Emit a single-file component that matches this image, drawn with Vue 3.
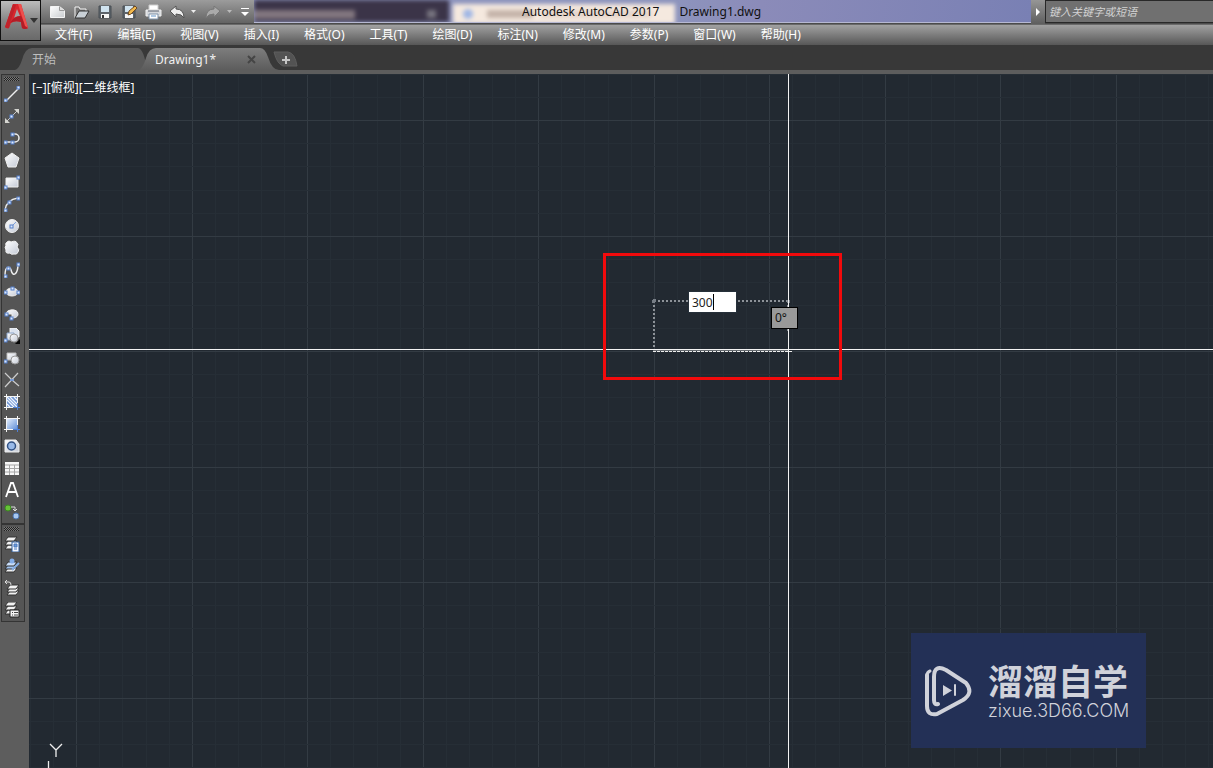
<script setup>
import { ref } from 'vue'

const menus = ['文件(F)', '编辑(E)', '视图(V)', '插入(I)', '格式(O)', '工具(T)', '绘图(D)', '标注(N)', '修改(M)', '参数(P)', '窗口(W)', '帮助(H)']
const length = ref('300')
const query = ref('')

const node = (x, y) => `<rect x="${x - 1}" y="${y - 1}" width="3" height="3" fill="#dce8fb" stroke="#547fc9"/>`
const sheet = (y, fill = '#f2f2f2') => `<path d="M4 ${y}h9l-3 4H1z" fill="${fill}" stroke="#333"/>`

const drawTools = [
  { label: '直线', art: `<path d="M2 15L15 2" stroke="#eee" stroke-width="1.5"/>${node(1, 14)}${node(14, 1)}` },
  { label: '构造线', art: `<path d="M2 14L14 2" stroke="#ccc"/><path d="M1 10v5h5zM10 1h5v5z" fill="#d5d5d0"/>${node(7, 8)}` },
  { label: '多段线', art: `<path d="M1 12H9M8 4h3a4 4 0 0 1 0 8H8" fill="none" stroke="#eee" stroke-width="1.5"/>${node(1, 12)}${node(8, 12)}${node(8, 4)}` },
  { label: '多边形', art: '<path d="M8 1l7 5-3 9H4L1 6z" fill="url(#face)" stroke="#eee"/>' },
  { label: '矩形', art: `<path d="M2 4h12v9H2z" fill="url(#face)" stroke="#eee"/>${node(1, 13)}${node(14, 3)}` },
  { label: '圆弧', art: `<path d="M1 14C2 7 7 3 14 2" fill="none" stroke="#eee" stroke-width="1.5"/>${node(1, 14)}${node(5, 6)}${node(14, 2)}` },
  { label: '圆', art: `<circle cx="8" cy="8" r="6.5" fill="url(#face)" stroke="#eee"/><path d="M8 8l4-4" stroke="#7da0dc"/>${node(7, 8)}` },
  { label: '修订云线', art: '<path d="M3 2q2-2 4 0q5-2 6 1q2 1 0 4q3 3 1 5q-1 3-4 2q-3 1-4-1q-5 1-4-3q-2-4 0-4q-1-3 1-4z" fill="url(#face)" stroke="#eee"/>' },
  { label: '样条曲线', art: `<path d="M1 14C1 2 6 5 7 8c2 8 7 4 7-6" fill="none" stroke="#eee" stroke-width="1.5"/>${node(1, 14)}${node(4, 6)}${node(14, 2)}` },
  { label: '椭圆', art: `<ellipse cx="8" cy="8" rx="6" ry="4" fill="url(#face)" stroke="#eee"/>${node(1, 8)}${node(14, 8)}${node(8, 4)}` },
  { label: '椭圆弧', art: `<path d="M2 8C2 3 14 2 14 8c0 3-3 4-6 4V8z" fill="url(#face)" stroke="#eee"/>${node(2, 8)}${node(7, 12)}` },
  { label: '插入块', art: `<path d="M6 0h6l3 3v6H6z" fill="#dbe3ef" stroke="#f4f4f4"/><path d="M3 5h7v7H3z" fill="url(#face)" stroke="#8ea7cc"/><circle cx="10" cy="10" r="4" fill="url(#face)" stroke="#999"/>${node(1, 12)}<path d="M16 11v5h-5z" fill="#050505"/>` },
  { label: '创建块', art: `<path d="M3 3h9v7H3z" fill="url(#face)" stroke="#bbb"/><circle cx="11" cy="10" r="4" fill="url(#face)" stroke="#999"/>${node(1, 11)}` },
  { label: '点', art: '<path d="M1 1l7 7M1 15L14 1M8 8l7 6" stroke="#ccc" stroke-width="1.2"/><path d="M6 7h4v2H6z" fill="#799bd5"/>' },
  { label: '图案填充', art: '<path d="M3 3h10v10H3z" fill="#6e94d2"/><path d="M3 6l7 7M3 3l10 10M6 3l7 7M10 3l3 3M3 10l3 3" stroke="#edf4ff" stroke-width="1.3"/><path d="M0 2.500h16M2.500 0v16M13.500 0v10M0 13.500h10" stroke="#f5f5f5"/><path d="M9 13.500h7M13.500 9v7" stroke="#4f80d4"/>' },
  { label: '渐变色', art: '<path d="M3 3h10v10H3z" fill="url(#blue)"/><path d="M0 2.500h16M2.500 0v16M13.500 0v10M0 13.500h10" stroke="#f5f5f5"/><path d="M9 13.500h7M13.500 9v7" stroke="#4f80d4"/>' },
  { label: '面域', art: '<path d="M1 2h11l3 4v8H1z" fill="url(#face)" stroke="#eee"/><circle cx="7.500" cy="8" r="4" fill="#99bae9" stroke="#315183" stroke-width="1.5"/>' },
  { label: '表格', art: '<path d="M1 2h14v13H1z" fill="#f7f7f7"/><path d="M1 5h14M1 8.500h14M1 12h14M5.500 5v10M10.500 5v10" stroke="#a5a5a5"/>' },
  { label: '多行文字', art: '<path d="M2 15L7 1h2l5 14M4.500 10h7" fill="none" stroke="#fff" stroke-width="1.8"/>' },
  { label: '添加选定对象', art: '<circle cx="4" cy="4" r="3" fill="#66c338" stroke="#3b8920"/><circle cx="12" cy="12" r="3" fill="#a8c7f1" stroke="#4b75b5"/><path d="M7 3h4v4M9 5l2 2 2-2" fill="none" stroke="#ddd"/>' }
]
const layerTools = [
  { label: '图层特性', art: `${sheet(9)}${sheet(5)}${sheet(1)}<path d="M8 6h7v10H8z" fill="#f5f8ff" stroke="#315e9d"/><path d="M10 8h3v3h-3zM10 13h3" fill="#6c99d8" stroke="#4879bd"/>` },
  { label: '置为当前', art: `${sheet(10)}${sheet(7, '#9fc2f0')}${sheet(4, '#c9ddf8')}<circle cx="8" cy="3" r="2.500" fill="#84aee9"/><path d="M8 12l7-7" stroke="#86ade2" stroke-width="2"/>` },
  { label: '上一个图层', art: `<g transform="translate(2 1)">${sheet(10)}${sheet(7)}${sheet(4)}</g><path d="M3 0L1 2l2 2M1 2h4q2 0 2 3" fill="none" stroke="#ddd"/>` },
  { label: '图层状态', art: `${sheet(8)}${sheet(4)}${sheet(0)}<path d="M6 8h9v7H6z" fill="#f5f5f5" stroke="#222"/><path d="M8 10.500h1M10 10.500h4M8 13h1M10 13h4" stroke="#444"/>` }
]
const quickTools = [
  { label: '新建', art: '<path d="M1.500 2.500h9l5 4v7h-14z" fill="url(#paper)" stroke="#f4f4f4"/><path d="M10.500 2.500v4h5" fill="#ddd" stroke="#999"/>' },
  { label: '打开', art: '<path d="M2 14V3h4l1 2h6v2" fill="#777" stroke="#f4f4f4"/><path d="M2 14L6 7h10l-4 7z" fill="#c9d0d6" stroke="#333"/>' },
  { label: '保存', art: '<path d="M2 2h12v12H2z" fill="#5d646b" stroke="#484e54"/><path d="M4 2h8v6H4z" fill="#d0e3ef"/><path d="M4 10h8v4H4z" fill="#f5f5f5"/><path d="M6 11v3" stroke="#333" stroke-width="2"/>' },
  { label: '另存为', art: '<path d="M2 2h12v12H2z" fill="#5d646b" stroke="#484e54"/><path d="M4 2h8v6H4z" fill="#d0e3ef"/><path d="M4 10h8v4H4z" fill="#f5f5f5"/><path d="M7 11l1-4 6-5 2 2-6 6z" fill="#f2b94d" stroke="#704a22"/>' },
  { label: '打印', art: '<path d="M4 1h9v5H4z" fill="#fff" stroke="#ccc"/><path d="M1 6h15v6H1z" fill="#d4d7dc" stroke="#f1f1f1"/><path d="M3 7h11" stroke="#5c6570"/><path d="M4 10h9v5H4z" fill="#fff" stroke="#7e91a8"/><path d="M6 12h5" stroke="#5f91c8"/>' }
]

const span = (start, count) => Array.from({ length: count }, (_, i) => ({
  at: Math.round(start + i * 23.1),
  major: (i + 3) % 5 === 0
}))
const columns = span(1, 110)
const rows = span(0, 70)
</script>

<template>
  <div class="cad">
    <svg class="defs" aria-hidden="true">
      <defs>
        <linearGradient id="face" x1="0" y1="0" x2="1" y2="1"><stop stop-color="#fff" /><stop offset="1" stop-color="#c3c9d5" /></linearGradient>
        <linearGradient id="paper" x1="0" y1="0" x2="1" y2="1"><stop stop-color="#fff" /><stop offset="1" stop-color="#c9cccf" /></linearGradient>
        <linearGradient id="blue" x1="0" y1="0" x2="1" y2="1"><stop stop-color="#e2edfc" /><stop offset="1" stop-color="#6693d9" /></linearGradient>
      </defs>
    </svg>

    <header class="top">
      <button class="app-button" aria-label="应用程序菜单">
        <svg width="39" height="36" viewBox="0 0 39 36">
          <path d="M13 16l3-9 4 8z" fill="#a5a3a3" />
          <path d="M4 26L12 3h8l7 24q-3 2-6 0l-1-6q-6-2-10 1l-2 5q-2 1-4-1zM16 8l-3 9q3-2 6-2z" fill="#d8272e" fill-rule="evenodd" />
          <path d="M4 26L12 3l3 1-6 18-1 5q-2 1-4-1z" fill="#c0222a" />
          <path d="M9 22q4-7 11-7l7 12q-3 2-6 0l-1-6q-6-2-11 1z" fill="#b31c26" />
          <path d="M17 3h3l7 24-3-2z" fill="#ee4f4d" />
          <path d="M29 17h8l-4 5z" fill="#333" />
        </svg>
      </button>
      <div class="bars">
        <div class="title-bar">
          <div class="quick">
            <button v-for="t in quickTools" :key="t.label" :aria-label="t.label"><svg width="17" height="17" viewBox="0 0 17 17" fill="none" v-html="t.art" /></button>
            <button aria-label="放弃"><svg width="29" height="16" viewBox="0 0 29 16"><path d="M1 7l6-5v3q8 0 8 9q-2-4-8-4v3z" fill="#eee" stroke="#555" /><path d="M22 6h5l-2.500 3z" fill="#eee" /></svg></button>
            <button aria-label="重做"><svg width="29" height="16" viewBox="0 0 29 16"><path d="M15 7L9 2v3q-8 0-8 9q2-4 8-4v3z" fill="#aaa" stroke="#777" /><path d="M22 6h5l-2.500 3z" fill="#bbb" /></svg></button>
            <button class="more" aria-label="自定义快速访问工具栏"><svg width="10" height="12" viewBox="0 0 10 12"><path d="M1 2.500h8" stroke="#fff" /><path d="M1 6h8l-4 4z" fill="#fff" /></svg></button>
          </div>
          <div class="glass">
            <div class="behind" aria-hidden="true"><div class="dark"><i></i><b></b></div><div class="cream"><em></em><i></i><b></b></div></div>
            <h1 class="title"><span>Autodesk AutoCAD 2017</span><span>Drawing1.dwg</span></h1>
          </div>
          <button class="expand" aria-label="展开搜索"><svg width="12" height="12" viewBox="0 0 12 12"><path d="M4 2l4 4-4 4z" fill="#fff" /></svg></button>
          <input v-model="query" class="search" type="text" placeholder="键入关键字或短语" aria-label="搜索">
        </div>
        <nav class="menu"><button v-for="m in menus" :key="m">{{ m }}</button></nav>
      </div>
    </header>

    <div class="tabs">
      <svg class="tab-art" width="310" height="25" viewBox="0 0 310 25" aria-hidden="true">
        <defs><linearGradient id="tab" x2="0" y2="1"><stop stop-color="#7d7d7d" /><stop offset="1" stop-color="#5c5c5c" /></linearGradient></defs>
        <path d="M15 25Q19 24 22 15Q25 3 32 3H138Q144 4 147 25z" fill="#595959" />
        <path d="M139 25Q143 23 146 13Q149 3 156 3H260Q265 3 268 12Q272 25 279 25z" fill="url(#tab)" />
        <path d="M274 7H288Q295 8 297 21H283Q277 19 274 7z" fill="#535353" stroke="#5e5e5e" />
      </svg>
      <button class="start">开始</button>
      <button class="drawing">Drawing1*</button>
      <button class="close" aria-label="关闭图形"><svg width="9" height="9" viewBox="0 0 9 9"><path d="M1 1l7 7M8 1L1 8" stroke="#454545" stroke-width="2" /></svg></button>
      <button class="plus" aria-label="新图形"><svg width="10" height="10" viewBox="0 0 10 10"><path d="M5 1v8M1 5h8" stroke="#c6c6c6" stroke-width="2" /></svg></button>
    </div>

    <div class="work">
      <aside class="side">
        <div class="toolbar" role="toolbar" aria-label="绘图">
          <span class="grip"></span>
          <button v-for="t in drawTools" :key="t.label" :aria-label="t.label"><svg width="16" height="16" viewBox="0 0 16 16" fill="none" v-html="t.art" /></button>
        </div>
        <div class="toolbar" role="toolbar" aria-label="图层">
          <span class="grip"></span>
          <button v-for="t in layerTools" :key="t.label" :aria-label="t.label"><svg width="16" height="16" viewBox="0 0 16 16" fill="none" v-html="t.art" /></button>
        </div>
      </aside>

      <main class="canvas">
        <svg class="grid" width="100%" height="100%" shape-rendering="crispEdges" aria-hidden="true">
          <rect v-for="c in columns" :key="'c' + c.at" :x="c.at" y="0" width="1" height="100%" :fill="c.major ? '#333b43' : '#262e36'" />
          <rect v-for="r in rows" :key="'r' + r.at" x="0" :y="r.at" width="100%" height="1" :fill="r.major ? '#333b43' : '#262e36'" />
          <path d="M625 227H759M625 227V275M759 227V259" fill="none" stroke="#8d9298" stroke-width="2" stroke-dasharray="2 2" />
          <path d="M623 227h3M625 225v3M758 227h3" stroke="#777e86" stroke-width="3" />
          <rect x="0" y="275" width="100%" height="1" fill="#f3f3f3" />
          <rect x="759" y="0" width="1" height="100%" fill="#f3f3f3" />
          <path d="M624 277.500H763" stroke="#eee" stroke-dasharray="3 1" />
          <path d="M624 276.500H759" stroke="#666b70" />
          <path d="M21 670l6 6 6-6M27 676v7M19.500 687v20" fill="none" stroke="#eee" stroke-width="1.3" shape-rendering="auto" />
        </svg>
        <div class="view"><button>[−]</button><button>[俯视]</button><button>[二维线框]</button></div>
        <div class="highlight"></div>
        <input v-model="length" class="length" type="text" aria-label="长度">
        <span class="caret"></span>
        <output class="angle">0°</output>
        <div class="brand">
          <svg width="48" height="52" viewBox="0 0 48 52" fill="none" stroke="#d0d2da" stroke-linecap="round" stroke-linejoin="round">
            <path d="M3 10V41Q3 51 13 49L39 35Q50 28 42 18L22 5Q10-1 10 12V35Q10 40 14 39" stroke-width="4" />
            <path d="M3 11Q3 7 6 6" stroke-width="3" />
            <path d="M19 20v11l9-5.500z" fill="#d0d2da" stroke="none" /><path d="M31 20v10" stroke-width="2" />
          </svg>
          <div class="brand-text"><strong>溜溜自学</strong><span>zixue.3D66.COM</span></div>
        </div>
      </main>
    </div>
  </div>
</template>

<style>
body { margin: 0; background: #222931; }
</style>

<style scoped>
.cad { display: flex; flex-direction: column; height: 100vh; overflow: hidden; font: 12px/16px "Noto Sans", "Noto Sans CJK SC", sans-serif; color: #fff; background: #383838; }
.defs { position: absolute; width: 0; height: 0; }
button { display: flex; align-items: center; justify-content: center; padding: 0; border: 0; background: none; color: inherit; font: inherit; white-space: nowrap; }
svg { display: block; flex: none; }
input { box-sizing: border-box; border-radius: 0; outline: 0; font: inherit; }
.top { display: flex; height: 45px; background: linear-gradient(#9c9c9c, #636363 23px, #333 24px, #a1a1a1 25px, #575757); flex: none; }
.app-button { box-sizing: border-box; width: 41px; height: 41px; border: 1px solid #101010; background: linear-gradient(#bcbcbc, #858585 50%, #696969); align-items: flex-start; flex: none; }
.bars { flex: 1; min-width: 0; }
.title-bar { display: flex; height: 24px; }
.quick { box-sizing: border-box; display: flex; align-items: center; width: 213px; padding-left: 8px; gap: 7px; flex: none; }
.quick .more { margin-left: -1px; }
.glass { position: relative; flex: 1; height: 22px; overflow: hidden; border-bottom: 1px solid #b6b8d2; background: linear-gradient(100deg, #8d94bd 54%, #8b8bb9 65%, #7980b4); }
.behind { display: flex; height: 22px; filter: blur(2px); }
.dark { display: flex; align-items: center; width: 195px; padding-top: 6px; background: #3b3448; }
.dark i { width: 101px; height: 9px; background: #82767f; }
.dark b { width: 9px; height: 8px; margin-left: 72px; background: #77747f; }
.cream { display: flex; align-items: center; width: 222px; height: 20px; margin: 4px 0 0 4px; background: #f5e9df; }
.cream em { width: 10px; height: 10px; margin-left: 10px; border-radius: 50%; background: #9fb6e5; }
.cream i { width: 46px; height: 8px; margin-left: 14px; background: #c5b4aa; }
.cream b { width: 110px; height: 8px; margin-left: 8px; background: #e5d5cb; }
.title { position: absolute; inset: 0; display: flex; gap: 20px; margin: 0; padding: 4px 0 0 268px; font-size: 12px; line-height: 16px; font-weight: 400; color: #111; white-space: nowrap; }
.expand { width: 14px; background: linear-gradient(#969696, #5e5e5e); flex: none; }
.search { width: 168px; height: 23px; padding: 0 3px; border: 1px solid #282828; border-right: 0; background: #707070; color: #eee; font-style: italic; font-size: 11px; flex: none; }
.search::placeholder { color: #d2d2d2; opacity: 1; }
.menu { display: flex; gap: 25px; height: 21px; padding-left: 14px; align-items: center; }
.tabs { position: relative; display: flex; height: 25px; align-items: center; border-bottom: 4px solid #5d5d5d; background: #383838; flex: none; }
.tab-art { position: absolute; left: 0; top: 0; }
.tabs button { position: relative; height: 20px; margin-top: 4px; }
.start { margin-left: 31px; color: #bebebe; width: 26px; }
.drawing { margin-left: 98px; width: 61px; color: #f1f1f1; }
.close { margin-left: 31px; }
.plus { margin-left: 25px; }
.work { display: flex; flex: 1; min-height: 0; }
.side { width: 29px; background: #5d5d5d; flex: none; }
.toolbar { box-sizing: border-box; width: 24px; margin-left: 1px; border: 1px solid #343434; background: #555; }
.toolbar button { width: 20px; height: 22px; }
.grip { display: block; width: 15px; height: 4px; margin: 2px 0 2px 2px; background: repeating-conic-gradient(#222 0 25%, #777 0 50%) 0 0 / 2px 2px; }
.canvas { position: relative; flex: 1; min-width: 0; overflow: hidden; background: #222931; }
.grid { position: absolute; inset: 0; }
.view { position: relative; display: flex; padding: 6px 0 0 3px; }
.highlight { position: absolute; left: 574px; top: 179px; width: 233px; height: 121px; border: 3px solid #f20a0c; }
.length { position: absolute; left: 659px; top: 217px; width: 49px; height: 22px; padding: 0 3px; border: 1px solid #26303a; background: #fff; color: #222; }
.caret { position: absolute; left: 684px; top: 220px; width: 1px; height: 16px; background: #000; }
.angle { position: absolute; left: 742px; top: 233px; box-sizing: border-box; width: 27px; height: 22px; padding: 2px 3px; border: 1px solid #000; background: #999; color: #111; }
.brand { position: absolute; right: 67px; bottom: 20px; box-sizing: border-box; display: flex; align-items: center; gap: 16px; width: 235px; height: 115px; padding-left: 13px; background: #233056; color: #d0d2da; }
.brand-text { display: flex; flex-direction: column; padding-bottom: 4px; }
.brand strong { font: 700 35px/44px "Noto Sans CJK SC", sans-serif; }
.brand-text span { font: 300 18px/18px Inter, sans-serif; }
</style>
